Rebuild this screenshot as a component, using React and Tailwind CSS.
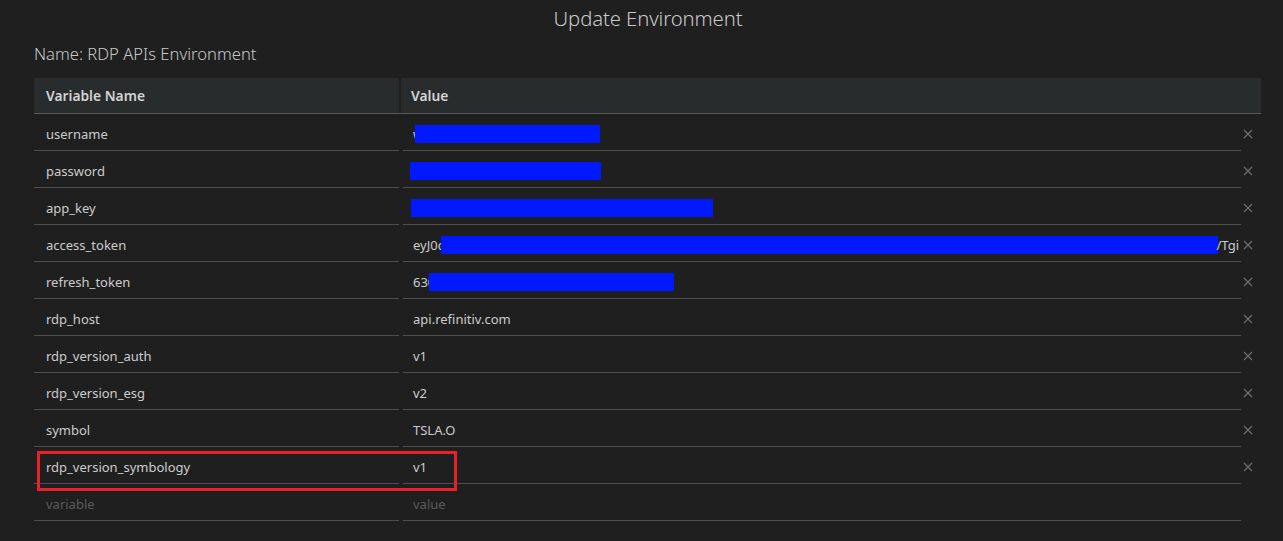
import React from "react";

const rows = [
  { name: "username", value: "w", box: { left: 12, width: 185 } },
  { name: "password", value: "", box: { left: 7, width: 191 } },
  { name: "app_key", value: "", box: { left: 8, width: 302 } },
  { name: "access_token", value: "eyJ0c", box: { left: 38, width: 777 }, tail: "/Tgi" },
  { name: "refresh_token", value: "630", box: { left: 26, width: 245 } },
  { name: "rdp_host", value: "api.refinitiv.com" },
  { name: "rdp_version_auth", value: "v1" },
  { name: "rdp_version_esg", value: "v2" },
  { name: "symbol", value: "TSLA.O" },
  { name: "rdp_version_symbology", value: "v1", highlight: true },
];

function XIcon() {
  return (
    <svg width="10" height="10" viewBox="0 0 10 10" className="text-[#6f6f6f]">
      <path d="M1 1 L9 9 M9 1 L1 9" stroke="currentColor" strokeWidth="1.1" fill="none" />
    </svg>
  );
}

export default function App() {
  const font = { fontFamily: '"Noto Sans", "Open Sans", sans-serif' };
  return (
    <div className="w-[1283px] h-[541px] bg-[#1f1f1f] text-[#cccccc] overflow-hidden" style={font}>
      <div className="h-[37px] flex items-center justify-center pl-[13px]">
        <span className="text-[20.3px] font-light text-[#c8c8c8] tracking-[-0.1px]">Update Environment</span>
      </div>
      <div className="px-[34px] h-[34px] flex items-center pt-[1px]">
        <span className="text-[16.6px] font-light text-[#c8c8c8]">Name: RDP APIs Environment</span>
      </div>
      <div className="mx-[34px] mt-[7px] w-[1227px]">
        {/* header */}
        <div className="flex h-[36px] bg-[#292c2d] border-b border-[#5a5a5a] text-[13.8px] font-semibold text-[#d4d4d4]">
          <div className="w-[367px] pl-[12px] pt-[2px] flex items-center border-r-2 border-[#1f1f1f]">Variable Name</div>
          <div className="flex-1 pl-[10px] pt-[2px] flex items-center">Value</div>
        </div>
        {rows.map((r) => (
          <div key={r.name} className="flex h-[37px] text-[13px] relative">
            <div className="w-[365px] pl-[12px] pt-[6px] flex items-center border-b border-[#4e4e4e]">{r.name}</div>
            <div className="w-[4px]"></div>
            <div className="w-[838px] pl-[10px] pt-[6px] flex items-center border-b border-[#4e4e4e] relative">
              <span>{r.value}</span>
              {r.box && (
                <div
                  className="absolute top-[11px] h-[18px] bg-[#0019ff]"
                  style={{ left: r.box.left, width: r.box.width }}
                />
              )}
              {r.tail && <span className="absolute right-[2px]">{r.tail}</span>}
            </div>
            <div className="w-[20px] flex items-center pl-[2px] pt-[3px]">
              <XIcon />
            </div>
            {r.highlight && (
              <div className="absolute left-[3px] top-[4px] w-[420px] h-[40px] border-[3px] border-[#e8202a]" />
            )}
          </div>
        ))}
        <div className="flex h-[37px] text-[13px] text-[#5a5a5a]">
          <div className="w-[365px] pl-[12px] pt-[6px] flex items-center border-b border-[#4e4e4e]">variable</div>
          <div className="w-[4px]"></div>
          <div className="w-[838px] pl-[10px] pt-[6px] flex items-center border-b border-[#4e4e4e]">value</div>
        </div>
      </div>
    </div>
  );
}
